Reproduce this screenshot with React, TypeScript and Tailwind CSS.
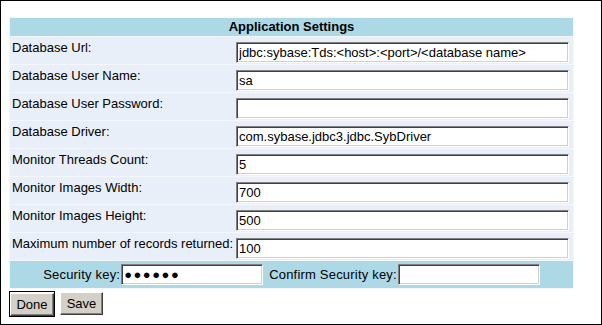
import React from "react";

const rows = [
  { label: "Database Url:", value: "jdbc:sybase:Tds:<host>:<port>/<database name>" },
  { label: "Database User Name:", value: "sa" },
  { label: "Database User Password:", value: "", password: true },
  { label: "Database Driver:", value: "com.sybase.jdbc3.jdbc.SybDriver" },
  { label: "Monitor Threads Count:", value: "5" },
  { label: "Monitor Images Width:", value: "700" },
  { label: "Monitor Images Height:", value: "500" },
  { label: "Maximum number of records returned:", value: "100" },
];

// classic sunken text field
const field =
  "h-[21px] bg-white border border-t-[#808080] border-l-[#808080] border-b-white border-r-white shadow-[inset_1px_1px_0_#404040,inset_-1px_-1px_0_#d4d0c8] pl-[2px] text-[13px] text-black outline-none";

const button =
  "h-[23px] bg-[#d4d0c8] border border-t-white border-l-white border-b-[#404040] border-r-[#404040] shadow-[inset_-1px_-1px_0_#808080] text-[13px] text-black leading-none";

export default function App() {
  return (
    <div
      className="w-[602px] h-[325px] bg-white border border-black pt-[16px] pl-[8px]"
      style={{ fontFamily: '"Liberation Sans", Arial, sans-serif' }}
    >
      <div className="w-[565px] bg-[#f4f7fb] p-[1px] flex flex-col gap-[1px]">
        <div className="h-[18px] bg-[#add8e6] flex items-center justify-center text-[13px] font-bold text-black">
          Application Settings
        </div>

        {rows.map((r) => (
          <div key={r.label} className="h-[27px] bg-[#e9eff8] flex">
            <div className="w-[226px] pl-[2px] pt-[3px] text-[13px] leading-[15px] text-black whitespace-nowrap">
              {r.label}
            </div>
            <div className="pt-[3px]">
              <input
                type={r.password ? "password" : "text"}
                readOnly
                defaultValue={r.value}
                className={`${field} w-[333px]`}
              />
            </div>
          </div>
        ))}

        <div className="h-[27px] bg-[#add8e6] flex items-center justify-center text-[13px] text-black">
          <span className="tracking-[0.2px]">Security key:</span>
          <input
            type="text"
            readOnly
            defaultValue="●●●●●●"
            className={`${field} w-[142px] ml-[1px] text-[12px] tracking-[1.5px]`}
          />
          <span className="ml-[6px] tracking-[0.2px]">Confirm Security key:</span>
          <input type="text" readOnly defaultValue="" className={`${field} w-[142px] ml-[1px]`} />
        </div>
      </div>

      <div className="flex gap-[5px] mt-[2px]">
        <div className="border border-black">
          <button className={`${button} w-[44px]`}>Done</button>
        </div>
        <button className={`${button} w-[43px] mt-[1px]`}>Save</button>
      </div>
    </div>
  );
}
